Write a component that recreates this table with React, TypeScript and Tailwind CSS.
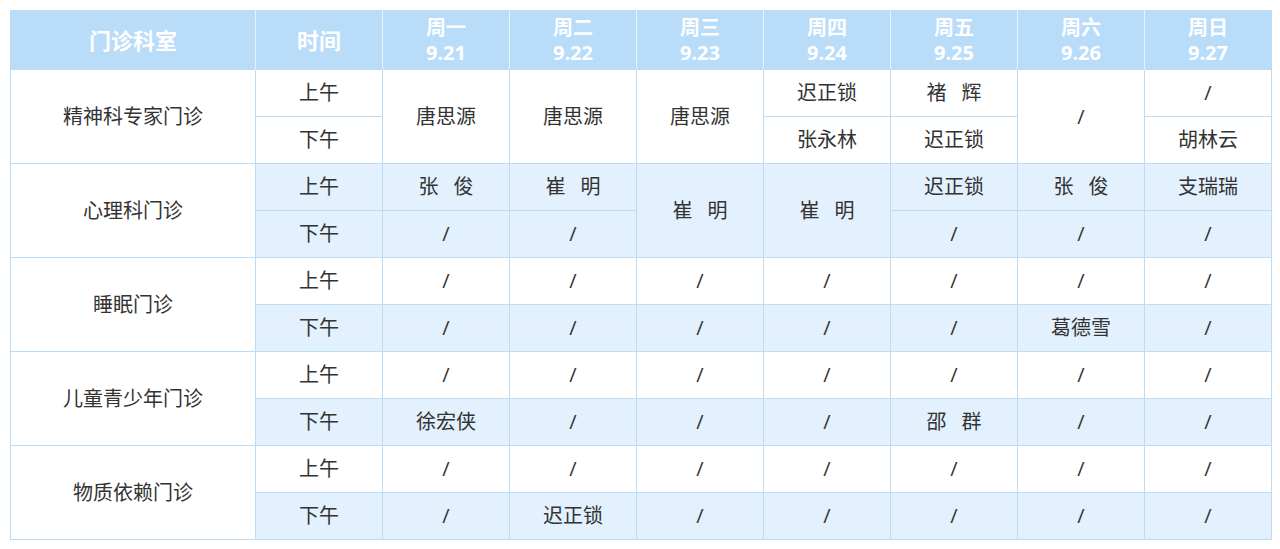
import React from 'react';

// 一格：text 为内容，rs 为跨行数
interface Cell {
    text: string;
    rs?: number;
}

interface Row {
    dept?: string;
    time: string;
    blue: boolean;
    cells: Cell[];
}

const days = [
    { name: '周一', date: '9.21' },
    { name: '周二', date: '9.22' },
    { name: '周三', date: '9.23' },
    { name: '周四', date: '9.24' },
    { name: '周五', date: '9.25' },
    { name: '周六', date: '9.26' },
    { name: '周日', date: '9.27' },
];

const S = '/';
const allSlash: Cell[] = Array.from({ length: 7 }, () => ({ text: S }));

const rows: Row[] = [
    {
        dept: '精神科专家门诊',
        time: '上午',
        blue: false,
        cells: [
            { text: '唐思源', rs: 2 },
            { text: '唐思源', rs: 2 },
            { text: '唐思源', rs: 2 },
            { text: '迟正锁' },
            { text: '褚\u2002 辉' },
            { text: S, rs: 2 },
            { text: S },
        ],
    },
    { time: '下午', blue: false, cells: [{ text: '张永林' }, { text: '迟正锁' }, { text: '胡林云' }] },
    {
        dept: '心理科门诊',
        time: '上午',
        blue: true,
        cells: [
            { text: '张\u2002 俊' },
            { text: '崔\u2002 明' },
            { text: '崔\u2002 明', rs: 2 },
            { text: '崔\u2002 明', rs: 2 },
            { text: '迟正锁' },
            { text: '张\u2002 俊' },
            { text: '支瑞瑞' },
        ],
    },
    { time: '下午', blue: true, cells: [{ text: S }, { text: S }, { text: S }, { text: S }, { text: S }] },
    { dept: '睡眠门诊', time: '上午', blue: false, cells: allSlash },
    {
        time: '下午',
        blue: true,
        cells: [{ text: S }, { text: S }, { text: S }, { text: S }, { text: S }, { text: '葛德雪' }, { text: S }],
    },
    { dept: '儿童青少年门诊', time: '上午', blue: false, cells: allSlash },
    {
        time: '下午',
        blue: true,
        cells: [{ text: '徐宏侠' }, { text: S }, { text: S }, { text: S }, { text: '邵\u2002 群' }, { text: S }, { text: S }],
    },
    { dept: '物质依赖门诊', time: '上午', blue: false, cells: allSlash },
    {
        time: '下午',
        blue: true,
        cells: [{ text: S }, { text: '迟正锁' }, { text: S }, { text: S }, { text: S }, { text: S }, { text: S }],
    },
];

export default function App() {
    return (
        <div
            className="w-[1280px] h-[549px] bg-white pt-[10px] pl-[10px]"
            style={{ fontFamily: '"Open Sans", "Noto Sans CJK SC", sans-serif' }}
        >
            <table className="table-fixed border-collapse w-[1261px] border border-[#bcdcf6] text-[#333333] text-[20px]">
                <colgroup>
                    <col className="w-[245px]" />
                    <col className="w-[127px]" />
                    {days.map(d => (
                        <col key={d.name} className="w-[127px]" />
                    ))}
                </colgroup>
                <thead>
                    <tr className="bg-[#b9dcf9] text-white font-bold h-[59px]">
                        <th className="border-r border-[#e6f3fd] text-[22px] font-bold">门诊科室</th>
                        <th className="border-r border-[#e6f3fd] text-[22px] font-bold">时间</th>
                        {days.map(d => (
                            <th key={d.name} className="border-r border-[#e6f3fd] last:border-r-0 font-bold text-[20px] leading-[25px]">
                                <div>{d.name}</div>
                                <div>{d.date}</div>
                            </th>
                        ))}
                    </tr>
                </thead>
                <tbody>
                    {rows.map((row, i) => (
                        <tr key={i} className={`h-[47px] leading-[24px] ${row.blue ? 'bg-[#e2f1fd]' : 'bg-white'}`}>
                            {row.dept && (
                                <td rowSpan={2} className="bg-white border border-[#bcdcf6] text-center">
                                    {row.dept}
                                </td>
                            )}
                            <td className="border border-[#bcdcf6] text-center">{row.time}</td>
                            {row.cells.map((c, j) => (
                                <td key={j} rowSpan={c.rs} className="border border-[#bcdcf6] text-center">
                                    {c.text}
                                </td>
                            ))}
                        </tr>
                    ))}
                </tbody>
            </table>
        </div>
    );
}
